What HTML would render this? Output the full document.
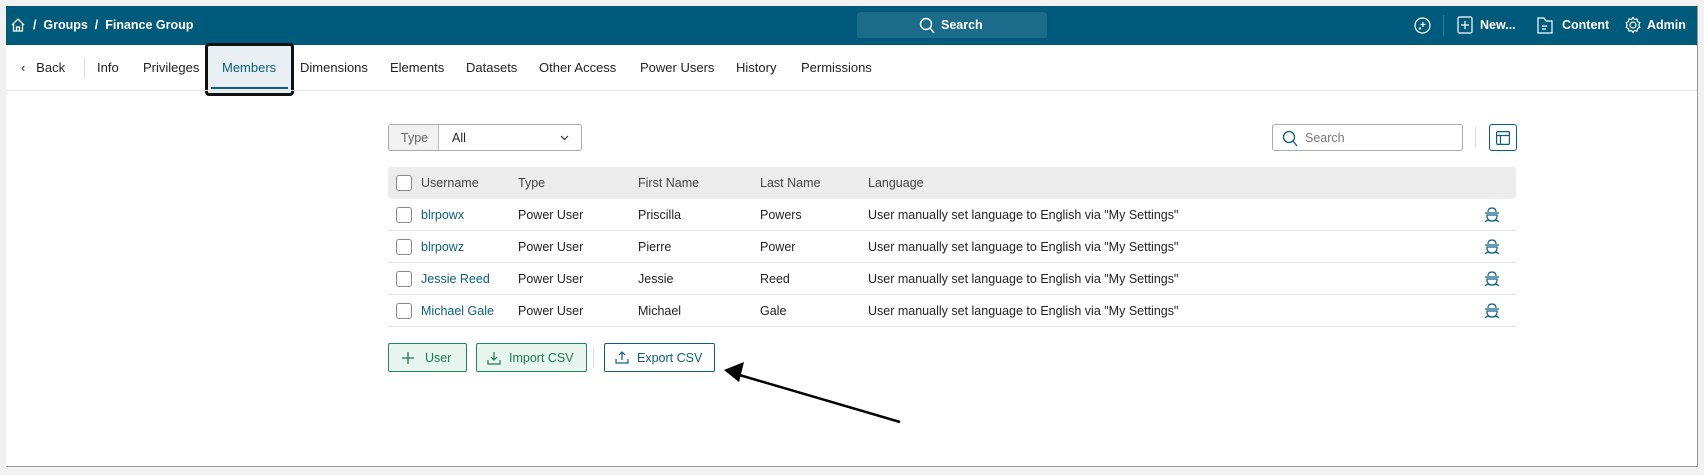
<!DOCTYPE html>
<html><head><style>
*{box-sizing:border-box;margin:0;padding:0}
body{width:1704px;height:469px;background:#f1f1f1;font-family:"Liberation Sans",sans-serif;font-size:13px;color:#222;position:relative;overflow:hidden}
.frame{position:absolute;left:6px;top:6px;width:1692px;height:461px;background:#fff;border-right:1px solid #999;border-bottom:1px solid #999}
.bar{position:absolute;left:0;top:0;width:1691px;height:39px;background:#005a7c;color:#fff}
.a{position:absolute;font-weight:bold;font-size:12.5px}
.tabs span{position:absolute;top:54px;font-size:13px;color:#222}
.hl{position:absolute;left:199px;top:37px;width:89px;height:53px;border:3px solid #111;border-radius:4px;background:#e9f0f4}
.row{position:absolute;left:382px;width:1128px;height:32px;border-bottom:1px solid #e3e3e3;font-size:12.5px}
.row span,.hd span{position:absolute;top:9px}
.cb{position:absolute;left:8px;top:8px;width:16px;height:16px;border:1px solid #888;border-radius:3px;background:#fff}
.lnk{color:#0b5f82}
.btn{position:absolute;top:337px;height:29px;border:1px solid #1a8a5a;border-radius:2px;background:#e8f4ee;color:#1a7a4e;font-size:12.5px}
</style></head><body>
<div class="frame">
<div class="bar">
 <svg style="position:absolute;left:4px;top:11px" width="16" height="16" viewBox="0 0 16 16" fill="none" stroke="#fff" stroke-width="1.3"><path d="M2 8 8 2l6 6M3.5 7v7h9V7M6.5 14V10h3v4"/></svg>
 <div class="a" style="left:27px;top:12px">/&nbsp;&nbsp;Groups&nbsp;&nbsp;/&nbsp;&nbsp;Finance Group</div>
 <div style="position:absolute;left:851px;top:6px;width:190px;height:26px;background:#1b6c8a;border-radius:3px"></div>
 <svg style="position:absolute;left:913px;top:11px" width="16" height="17" viewBox="0 0 16 17" fill="none" stroke="#fff" stroke-width="1.4"><circle cx="7" cy="7" r="5.5"/><path d="M11 11l4 5"/></svg>
 <div class="a" style="left:935px;top:12px">Search</div>
 <svg style="position:absolute;left:1408px;top:11px" width="17" height="17" viewBox="0 0 17 17" fill="none" stroke="#fff" stroke-width="1.2"><circle cx="8.5" cy="8.5" r="7.5"/><path d="M9 5v5M6.5 7.5h5"/><circle cx="6" cy="11.5" r=".6"/></svg>
 <div style="position:absolute;left:1437px;top:9px;width:1px;height:21px;background:#2f7a98"></div>
 <svg style="position:absolute;left:1451px;top:10px" width="16" height="18" viewBox="0 0 16 18" fill="none" stroke="#fff" stroke-width="1.2"><rect x="1" y="1" width="14" height="16" rx="1.5"/><path d="M8 5v8M4 9h8"/></svg>
 <div class="a" style="left:1474px;top:12px">New...</div>
 <svg style="position:absolute;left:1531px;top:10px" width="16" height="18" viewBox="0 0 16 18" fill="none" stroke="#fff" stroke-width="1.2"><path d="M1 2h6l2 3h6v12H1z"/><path d="M5 10h5M5 13h4"/></svg>
 <div class="a" style="left:1556px;top:12px">Content</div>
 <svg style="position:absolute;left:1618px;top:10px" width="18" height="18" viewBox="0 0 18 18" fill="none" stroke="#fff" stroke-width="1.2"><circle cx="9" cy="9" r="3"/><path d="M9 1.5l1.5 2 2.5-.5.5 2.5 2.3 1.2-1 2.3 1 2.3-2.3 1.2-.5 2.5-2.5-.5-1.5 2-1.5-2-2.5.5-.5-2.5-2.3-1.2 1-2.3-1-2.3 2.3-1.2.5-2.5 2.5.5z"/></svg>
 <div class="a" style="left:1641px;top:12px">Admin</div>
</div>
<div class="hl"></div>
<div style="position:absolute;left:205px;top:81px;width:77px;height:2px;background:#0b5f82"></div>
<div class="tabs">
 <span style="left:15px">&lsaquo;&nbsp;&nbsp;&nbsp;Back</span>
 <div style="position:absolute;left:78px;top:52px;width:1px;height:20px;background:#ddd"></div>
 <span style="left:91px">Info</span><span style="left:137px">Privileges</span>
 <span style="left:216px;color:#0b5f82">Members</span><span style="left:294px">Dimensions</span>
 <span style="left:384px">Elements</span><span style="left:460px">Datasets</span>
 <span style="left:533px">Other Access</span><span style="left:634px">Power Users</span>
 <span style="left:730px">History</span><span style="left:795px">Permissions</span>
</div>
<div style="position:absolute;left:0;top:84px;width:1691px;height:1px;background:#e6e6e6"></div>

<div style="position:absolute;left:382px;top:118px;width:194px;height:27px;border:1px solid #aaa;border-radius:3px;overflow:hidden;font-size:12.5px">
 <div style="position:absolute;left:0;top:0;width:50px;height:25px;background:#f2f2f2;border-right:1px solid #bbb;color:#666;padding:6px 0 0 12px">Type</div>
 <span style="position:absolute;left:63px;top:6px">All</span>
 <svg style="position:absolute;left:171px;top:10px" width="9" height="6" viewBox="0 0 9 6" fill="none" stroke="#333" stroke-width="1.2"><path d="M1 1l3.5 3.5L8 1"/></svg>
</div>
<div style="position:absolute;left:1266px;top:118px;width:191px;height:27px;border:1px solid #aaa;border-radius:3px;font-size:12.5px">
 <svg style="position:absolute;left:9px;top:5px" width="16" height="17" viewBox="0 0 16 17" fill="none" stroke="#0b5f82" stroke-width="1.3"><circle cx="7" cy="7" r="5.5"/><path d="M11 11l4 5"/></svg>
 <span style="position:absolute;left:32px;top:6px;color:#777">Search</span>
</div>
<div style="position:absolute;left:1469px;top:121px;width:1px;height:20px;background:#ddd"></div>
<div style="position:absolute;left:1483px;top:118px;width:28px;height:27px;border:1px solid #0b5f82;border-radius:3px">
 <svg style="position:absolute;left:6px;top:6px" width="14" height="14" viewBox="0 0 14 14" fill="none" stroke="#0b5f82" stroke-width="1.2"><rect x=".6" y=".6" width="12.8" height="12.8" rx="1"/><path d="M.6 4.5h12.8M4.5 4.5v8.9"/></svg>
</div>

<div class="hd" style="position:absolute;left:382px;top:161px;width:1128px;height:32px;background:#ececec;border-radius:3px;color:#444;font-size:12.5px">
 <div class="cb"></div><span style="left:33px">Username</span><span style="left:130px">Type</span><span style="left:250px">First Name</span><span style="left:372px">Last Name</span><span style="left:480px">Language</span>
</div>
<div class="row" style="top:193px"><div class="cb"></div><span class="lnk" style="left:33px">blrpowx</span><span style="left:130px">Power User</span><span style="left:250px">Priscilla</span><span style="left:372px">Powers</span><span style="left:480px">User manually set language to English via "My Settings"</span></div>
<div class="row" style="top:225px"><div class="cb"></div><span class="lnk" style="left:33px">blrpowz</span><span style="left:130px">Power User</span><span style="left:250px">Pierre</span><span style="left:372px">Power</span><span style="left:480px">User manually set language to English via "My Settings"</span></div>
<div class="row" style="top:257px"><div class="cb"></div><span class="lnk" style="left:33px">Jessie Reed</span><span style="left:130px">Power User</span><span style="left:250px">Jessie</span><span style="left:372px">Reed</span><span style="left:480px">User manually set language to English via "My Settings"</span></div>
<div class="row" style="top:289px"><div class="cb"></div><span class="lnk" style="left:33px">Michael Gale</span><span style="left:130px">Power User</span><span style="left:250px">Michael</span><span style="left:372px">Gale</span><span style="left:480px">User manually set language to English via "My Settings"</span></div>
<svg style="position:absolute;left:1478px;top:201px" width="16" height="120" viewBox="0 0 16 120" fill="none" stroke="#0b5f82" stroke-width="1.2">
<g id="s"><path d="M4 5q0-4 4-4t4 4M1 6h14M3 8h10v2q-1 4-5 4t-5-4zM1 15q3-3 5-1h4q2-2 5 1"/></g>
<use href="#s" y="32"/><use href="#s" y="64"/><use href="#s" y="96"/></svg>

<div class="btn" style="left:382px;width:79px">
 <svg style="position:absolute;left:13px;top:8px" width="12" height="12" viewBox="0 0 12 12" stroke="#1a7a4e" stroke-width="1.3"><path d="M6 0v12M0 6h12"/></svg>
 <span style="position:absolute;left:36px;top:7px">User</span></div>
<div class="btn" style="left:470px;width:111px">
 <svg style="position:absolute;left:10px;top:7px" width="14" height="14" viewBox="0 0 14 14" fill="none" stroke="#1a7a4e" stroke-width="1.2"><path d="M7 1v8M4 6l3 3 3-3M1 9v4h12V9"/></svg>
 <span style="position:absolute;left:32px;top:7px">Import CSV</span></div>
<div style="position:absolute;left:587px;top:342px;width:1px;height:20px;background:#ddd"></div>
<div class="btn" style="left:598px;width:111px;border-color:#0b5f82;background:#fff;color:#0b5f82">
 <svg style="position:absolute;left:10px;top:6px" width="14" height="14" viewBox="0 0 14 14" fill="none" stroke="#0b5f82" stroke-width="1.2"><path d="M7 10V2M4 5l3-3 3 3M1 9v4h12V9"/></svg>
 <span style="position:absolute;left:32px;top:7px">Export CSV</span></div>
<svg style="position:absolute;left:0;top:0" width="1000" height="469"><line x1="894" y1="416" x2="730" y2="368" stroke="#000" stroke-width="2.5"/><polygon points="718,364 738,356 733,376" fill="#000"/></svg>
</div>
</body></html>
